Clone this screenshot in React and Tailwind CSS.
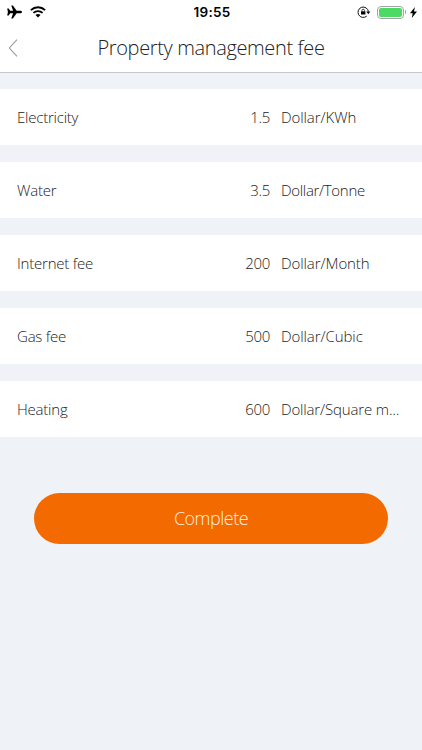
const fees = [
  { name: "Electricity", value: "1.5", unit: "Dollar/KWh" },
  { name: "Water", value: "3.5", unit: "Dollar/Tonne", tracking: "tracking-[-0.32px]" },
  { name: "Internet fee", value: "200", unit: "Dollar/Month" },
  { name: "Gas fee", value: "500", unit: "Dollar/Cubic" },
  { name: "Heating", value: "600", unit: "Dollar/Square m...", tracking: "tracking-[-0.15px]" },
];

function AirplaneIcon() {
  return (
    <svg viewBox="0 0 15 14" className="w-[15px] h-3.5" fill="#000">
      <path d="M15 7c0 .8-.9 1.3-2 1.3H9.7L5.9 13.6H4.3L6.1 8.3H3.2L1.7 10.5H.2L.9 7 .2 3.5h1.5L3.2 5.7h2.9L4.3.4h1.6L9.7 5.7H13c1.1 0 2 .5 2 1.3Z" />
    </svg>
  );
}

function WifiIcon() {
  return (
    <svg viewBox="0 0 16 12" className="w-4 h-3" fill="none" stroke="#000">
      <path d="M0.9 4.1C4.9 0.3 11.1 0.3 15.1 4.1" strokeWidth="2" />
      <path d="M3.4 6.9C6 4.5 10 4.5 12.6 6.9" strokeWidth="1.9" />
      <path d="M5.5 9C6.9 7.7 9.1 7.7 10.5 9L8 11.5Z" fill="#000" stroke="none" />
    </svg>
  );
}

function RotationLockIcon() {
  return (
    <svg viewBox="0 0 14 12" className="w-3.5 h-3" fill="none" stroke="#111">
      <path d="M9.7 10.1A5.2 5.2 0 1 1 11.4 5.8" strokeWidth="1" />
      <path d="M9.2 5.6H13.4L11.3 8.2Z" fill="#111" stroke="none" />
      <rect x="4" y="5.3" width="4.4" height="3.2" fill="#000" stroke="none" />
      <path d="M5 5.4V4.4a1.2 1.2 0 0 1 2.4 0V5.4" strokeWidth="0.8" />
    </svg>
  );
}

function StatusBar() {
  return (
    <div className="grid grid-cols-3 items-center h-6 pl-[7px] pr-[5px]">
      <div className="flex items-center gap-2">
        <AirplaneIcon />
        <WifiIcon />
      </div>
      <span className="text-center font-['Inter'] text-[13.5px] font-semibold tracking-[0.25px] text-black">
        19:55
      </span>
      <div className="flex items-center justify-end">
        <RotationLockIcon />
        <div className="ml-1.5 w-[27px] h-[13px] rounded-[4px] border border-[#a3a3a3] p-px">
          <div className="h-full rounded-[2px] bg-[#4cd964]" />
        </div>
        <div className="ml-px w-[1.5px] h-1 rounded-r bg-[#a3a3a3]" />
        <svg viewBox="0 0 7 11" className="ml-1 w-[7px] h-[11px]">
          <path d="M4.9 0L0 6.2H2.7L1.8 11L7 4.5H4Z" fill="#000" />
        </svg>
      </div>
    </div>
  );
}

function FeeRow({ name, value, unit, tracking = "tracking-[-0.08px]" }) {
  return (
    <div className="flex items-center h-14 bg-white pl-[17px] pr-[18px] text-[15px] text-[#222]">
      <span className="flex-1 tracking-[-0.22px]">{name}</span>
      <span className="text-right tracking-[-0.35px]">{value}</span>
      <span className={`ml-[11px] w-[123px] whitespace-nowrap ${tracking}`}>{unit}</span>
    </div>
  );
}

export default function App() {
  return (
    <div className="flex flex-col min-h-screen bg-[#eff3f7] font-['Open_Sans',sans-serif] font-light">
      <header className="h-[73px] bg-white border-b border-[#c8c8cc]">
        <StatusBar />
        <div className="grid grid-cols-[40px_1fr_40px] items-center h-12">
          <button className="pl-2">
            <svg viewBox="0 0 10 18" className="w-2.5 h-[18px]" fill="none" stroke="#999">
              <path d="M9 0.7L1.4 9L9 17.3" strokeWidth="1.1" />
            </svg>
          </button>
          <h1 className="text-center text-[20px] tracking-[-0.36px] text-[#222] whitespace-nowrap">
            Property management fee
          </h1>
        </div>
      </header>

      <main className="flex flex-col gap-[17px] pt-4">
        {fees.map((fee) => (
          <FeeRow key={fee.name} {...fee} />
        ))}
      </main>

      <button className="mx-[34px] mt-14 h-[51px] rounded-full bg-[#f36b00] text-[#ffeedd] text-[18px] tracking-[-0.5px]">
        Complete
      </button>
    </div>
  );
}
